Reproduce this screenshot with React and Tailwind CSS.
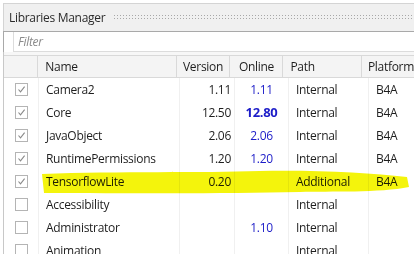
import React from "react";

const rows = [
  { name: "Camera2", ver: "1.11", online: "1.11", path: "Internal", plat: "B4A", checked: true },
  { name: "Core", ver: "12.50", online: "12.80", bold: true, path: "Internal", plat: "B4A", checked: true },
  { name: "JavaObject", ver: "2.06", online: "2.06", path: "Internal", plat: "B4A", checked: true },
  { name: "RuntimePermissions", ver: "1.20", online: "1.20", path: "Internal", plat: "B4A", checked: true },
  { name: "TensorflowLite", ver: "0.20", online: "", path: "Additional", plat: "B4A", checked: true },
  { name: "Accessibility", ver: "", online: "", path: "Internal", plat: "", checked: false },
  { name: "Administrator", ver: "", online: "1.10", path: "Internal", plat: "", checked: false },
  { name: "Animation", ver: "", online: "", path: "Internal", plat: "", checked: false },
];

function Check({ checked }) {
  return (
    <div className="w-[13px] h-[13px] border border-[#b4b4b4] bg-white flex items-center justify-center">
      {checked && (
        <svg width="11" height="11" viewBox="0 0 11 11">
          <path d="M2.5 5.5 L4.5 7.8 L8.6 2.6" fill="none" stroke="#8a8a8a" strokeWidth="1.1" />
        </svg>
      )}
    </div>
  );
}

export default function App() {
  return (
    <div className="relative w-[414px] h-[254px] overflow-hidden bg-white text-[12px] tracking-[-0.3px] text-[#1e1e1e]" style={{ fontFamily: '"Open Sans", "Noto Sans", sans-serif' }}>
      <div className="h-[3px] bg-white" />
      <div className="border-t border-[#d4d4d4] ml-[3px] border-l h-[28px] bg-[#f0f0f0] flex items-center pl-[5px] pr-0">
        <span className="text-[12px] text-[#2b2b2b] tracking-[-0.3px]">Libraries Manager</span>
        <div className="ml-[8px] flex-1 h-[7px] bg-[radial-gradient(circle,#a8a8a8_0.7px,transparent_0.8px)] bg-[length:3px_3px]" />
      </div>
      <div className="ml-[3px] border-l border-t border-[#a9a9a9] h-[21px] bg-white pl-[9px]">
        <div className="h-[20px] border-l border-b border-[#dcdcdc] pl-[4px] flex items-center">
          <span className="italic text-[#8a8a8a] text-[12px]">Filter</span>
        </div>
      </div>
      <div className="ml-[3px] border-l border-[#c8c8c8] h-[3px] bg-[#f7f7f7]" />
      <div className="ml-[3px] border-l border-[#c8c8c8]">
        <div className="flex h-[23px] bg-[#f4f4f4] border-t border-b border-[#d9d9d9] items-center">
          <div className="w-[35px] h-full border-r border-[#d9d9d9]" />
          <div className="w-[141px] h-full border-r border-[#d9d9d9] pl-[7px] flex items-center">Name</div>
          <div className="w-[55px] h-full border-r border-[#d9d9d9] flex items-center justify-center">Version</div>
          <div className="w-[54px] h-full border-r border-[#d9d9d9] flex items-center justify-center">Online</div>
          <div className="w-[80px] h-full border-r border-[#d9d9d9] pl-[7px] flex items-center">Path</div>
          <div className="flex-1 h-full pl-[6px] flex items-center whitespace-nowrap">Platform</div>
        </div>
        {rows.map((r) => (
          <div key={r.name} className="flex h-[23px] items-center">
            <div className="w-[35px] h-full border-r border-[#f0f0f0] flex items-center pl-[11px]">
              <Check checked={r.checked} />
            </div>
            <div className="w-[141px] h-full border-r border-[#f0f0f0] pl-[7px] flex items-center">{r.name}</div>
            <div className="w-[55px] h-full border-r border-[#f0f0f0] flex items-center justify-end pr-[3px]">{r.ver}</div>
            <div className={"w-[54px] h-full border-r border-[#f0f0f0] flex items-center justify-center text-[#1c1cc8] " + (r.bold ? "font-bold text-[13px]" : "")}>{r.online}</div>
            <div className="w-[80px] h-full border-r border-[#f0f0f0] pl-[7px] flex items-center">{r.path}</div>
            <div className="flex-1 h-full pl-[7px] flex items-center">{r.plat}</div>
          </div>
        ))}
      </div>
      <svg className="absolute left-0 top-0 pointer-events-none mix-blend-multiply" width="414" height="254">
        <path d="M42 174 C120 171 200 173 260 171 C320 170 370 173 407 177 L409 187 C380 193 330 191 300 192 C220 194 120 193 44 193 Z" fill="#f4f40c" />
      </svg>
    </div>
  );
}
